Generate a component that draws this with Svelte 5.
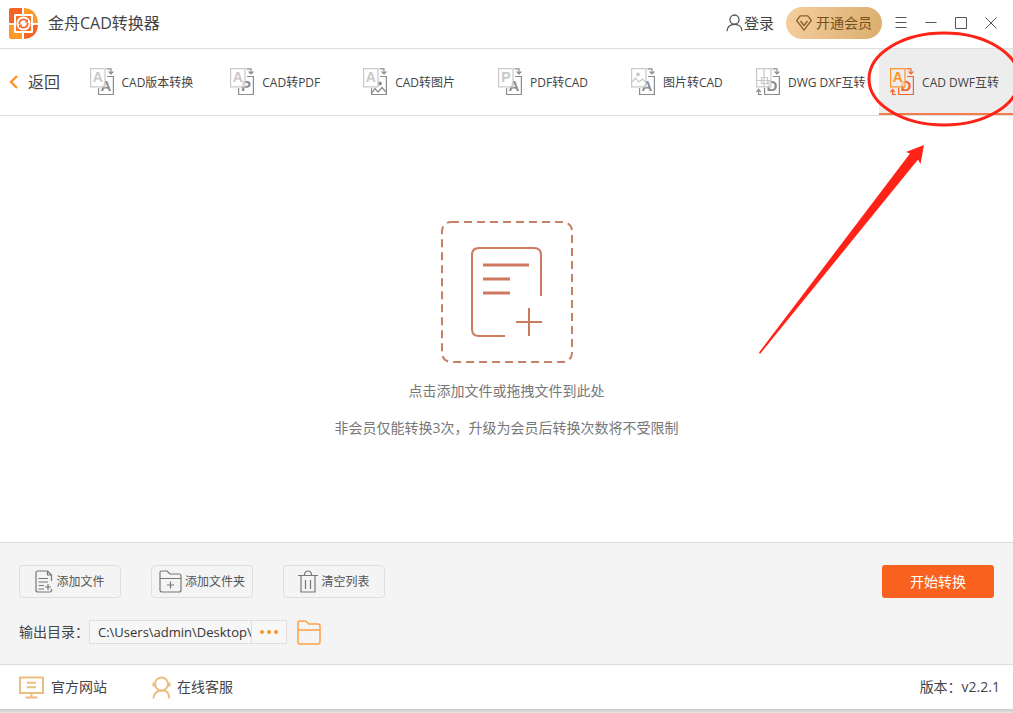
<script>
  const tabs = [
    { label: 'CAD版本转换', from: 'A', to: 'A' },
    { label: 'CAD转PDF', from: 'A', to: 'P' },
    { label: 'CAD转图片', from: 'A', to: 'image' },
    { label: 'PDF转CAD', from: 'P', to: 'A' },
    { label: '图片转CAD', from: 'image', to: 'A' },
    { label: 'DWG DXF互转', from: 'grid', to: 'D', both: true },
    { label: 'CAD DWF互转', from: 'A', to: 'D', both: true }
  ];
  let active = $state(6);
  let output = $state('C:\\Users\\admin\\Desktop\\');
</script>

{#snippet convertIcon(tab, on)}
  <svg class="tab-icon" class:on width="24" height="28" viewBox="0 0 24 28" fill="none" aria-hidden="true">
    <g class="front">
      <path d="M17 8.5H23.4V26.5H8.6V20" />
      {#if tab.to === 'image'}
        <path d="M9 25L12 20.5L15 24L19 19.5L23 24" /><circle class="dot" cx="17" cy="15.5" r="1.3" />
      {:else}
        <text x="16" y="23" text-anchor="middle">{tab.to}</text>
      {/if}
      <path d="M16.5 .8H21V5.5M18.6 3.5L21 6L23.4 3.5" />
      {#if tab.both}<path d="M6 26.5H2.6V21.5M.4 24L2.6 21.4L4.8 24" />{/if}
    </g>
    <g class="back">
      <path class="sheet" d="M.6 .6H15V18.8H.6Z" />
      {#if tab.from === 'image'}
        <path d="M1 14L4.500 10L8 14L11.500 11L15 14.500" /><circle class="dot" cx="7" cy="6.500" r="1.3" />
      {:else if tab.from === 'grid'}
        <path d="M8 .6V18.800M.6 12.500H15M5.500 9.500H11.500V15.500H5.500Z" />
      {:else}
        <text x="7.8" y="14" text-anchor="middle">{tab.from}</text>
      {/if}
    </g>
  </svg>
{/snippet}

<div class="window">
  <header>
    <svg width="30" height="31" viewBox="0 0 30 31" aria-hidden="true">
      <path fill="#f56426" d="M2 0H13V15H0V2Q0 0 2 0Z" />
      <path fill="#ff9828" d="M15 0Q28 1 29 15H15Z" />
      <path fill="#ff9828" d="M0 17H13V31H2Q0 31 0 29Z" />
      <path fill="#f56426" d="M15 17H29Q28 30 15 31Z" />
      <rect x="5" y="6" width="19" height="19" rx="1" fill="#fff" />
      <rect x="7" y="8" width="15" height="15" fill="#f5742c" />
      <path d="M0 16H7M22 16H29M14 0V8M14 23V31" stroke="#fff" stroke-width="2" />
      <circle cx="14.500" cy="15.500" r="7" fill="#fff" />
      <path d="M10.300 16A4.200 4.200 0 0 1 17.500 12.700M18.700 15A4.200 4.200 0 0 1 11.500 18.300" fill="none" stroke="#f5642c" stroke-width="1.7" />
      <path fill="#f5642c" d="M19 11V14.500H15.500ZM10 20V16.500H13.500Z" />
    </svg>
    <h1>金舟CAD转换器</h1>
    <button class="login">
      <svg width="17" height="18" viewBox="0 0 17 18" fill="none" stroke="#555" stroke-width="1.3" aria-hidden="true">
        <circle cx="8.5" cy="5.6" r="4.6" /><path d="M1 17.3C1 13 4 10.3 8.5 10.3S16 13 16 17.3" />
      </svg>登录
    </button>
    <button class="vip">
      <svg width="16" height="16" viewBox="0 0 16 16" fill="none" stroke="#8c6127" stroke-width="1.3" stroke-linejoin="round" aria-hidden="true">
        <path d="M4.2 .8H11.8L15.3 5.5L8 15.2L.7 5.5Z" /><path d="M4.5 6L8 10.5L11.5 6" />
      </svg>开通会员
    </button>
    <div class="controls">
      <button aria-label="菜单"><svg width="14" height="14" viewBox="0 0 14 14"><path d="M1.500 1.500H12.500M1.500 6.500H12.500M1.500 11.500H12.500" /></svg></button>
      <button aria-label="最小化"><svg width="14" height="14" viewBox="0 0 14 14"><path d="M1.500 6.500H12.500" /></svg></button>
      <button aria-label="最大化"><svg width="14" height="14" viewBox="0 0 14 14"><path d="M1.500 1.500H12.500V12.500H1.500Z" /></svg></button>
      <button aria-label="关闭"><svg width="14" height="14" viewBox="0 0 14 14"><path d="M1.500 1.500L12.500 12.500M12.500 1.500L1.500 12.500" /></svg></button>
    </div>
  </header>

  <nav>
    <button class="back-button">
      <svg width="9" height="14" viewBox="0 0 9 14" fill="none" stroke="#ff9328" stroke-width="2.4" aria-hidden="true"><path d="M8 1L2 7L8 13" /></svg>返回
    </button>
    {#each tabs as tab, i}
      <button class="tab" class:active={active === i} onclick={() => (active = i)}>
        {@render convertIcon(tab, active === i)}
        <span>{tab.label}</span>
      </button>
    {/each}
  </nav>

  <main>
    <button class="drop" aria-label="添加文件">
      <svg width="134" height="144" viewBox="0 0 134 144" fill="none" stroke="#cf7a60" aria-hidden="true">
        <rect x="2" y="2" width="130" height="140" rx="9" stroke="#c58068" stroke-width="2" stroke-dasharray="8 5" />
        <path d="M101 76V35Q101 28 94 28H39Q32 28 32 35V109Q32 116 39 116H65" stroke-width="2" />
        <path d="M43 45H89M43 59H70M43 73H70" stroke-width="3" />
        <path d="M76 102H102M89 88V116" stroke-width="2" />
      </svg>
    </button>
    <p>点击添加文件或拖拽文件到此处</p>
    <p>非会员仅能转换3次，升级为会员后转换次数将不受限制</p>
  </main>

  <section class="panel">
    <div class="actions">
      <button class="action">
        <svg width="18" height="23" viewBox="0 0 18 23" aria-hidden="true">
          <path d="M16.5 11V5L12.5 1H3Q1 1 1 3V20Q1 22 3 22H15Q16.5 22 16.5 20.5V19M12.5 1V5H16.5M3.5 8.5H13M3.5 12H13M3.5 15.5H9M3.5 19H9M13 14V20M10 17H16" />
        </svg>添加文件
      </button>
      <button class="action">
        <svg width="23" height="23" viewBox="0 0 23 23" aria-hidden="true">
          <path d="M1 19V2.5Q1 1 2.5 1H8L11 4H20Q22 4 22 6V20Q22 22 20 22H3Q1 22 1 20ZM1 8.5H22M11.5 11.5V18.5M8 15H15" />
        </svg>添加文件夹
      </button>
      <button class="action">
        <svg width="20" height="23" viewBox="0 0 20 23" aria-hidden="true">
          <path d="M0 5.5H20M3 5.5V22H17V5.5M6.5 5Q6.5 1 10 1T13.5 5M7.500 10V19M12.500 10V19" />
        </svg>清空列表
      </button>
      <button class="start">开始转换</button>
    </div>
    <div class="output">
      <label for="output">输出目录：</label>
      <input id="output" bind:value={output} />
      <button class="more" aria-label="选择目录"><i></i><i></i><i></i></button>
      <button class="open" aria-label="打开目录">
        <svg width="24" height="25" viewBox="0 0 24 25" fill="none" stroke="#ff9f45" stroke-width="1.5" aria-hidden="true">
          <path d="M1 22V2.5Q1 1 2.5 1H8.5L12 4H21Q23 4 23 6V22Q23 24 21 24H3Q1 24 1 22ZM1 10H23" />
        </svg>
      </button>
    </div>
  </section>

  <footer>
    <a class="site" href="#site">
      <svg width="25" height="23" viewBox="0 0 25 23" fill="none" stroke="#ebbd80" stroke-width="2" aria-hidden="true">
        <path d="M1 1.5H24V17H1ZM8 6.8H17M8 11.3H17M12.5 17V21M6.5 21.5H18.5" />
      </svg>官方网站
    </a>
    <a class="service" href="#service">
      <svg width="19" height="23" viewBox="0 0 19 23" fill="none" stroke="#ebbd80" stroke-width="2" aria-hidden="true">
        <circle cx="9.5" cy="8" r="6.5" /><path d="M1.5 22.5Q2 15 9.5 14.5T17.5 22.5" /><path d="M2 6.500V10.500M17 6.500V10.500" stroke-width="3" />
      </svg>在线客服
    </a>
    <span>版本：v2.2.1</span>
  </footer>
  <div class="shade"></div>

  <svg class="annotation" width="273" height="370" viewBox="0 0 273 370" aria-hidden="true">
    <ellipse cx="204" cy="79" rx="75" ry="46" fill="none" stroke="#ff2317" stroke-width="3" />
    <path fill="#ff2317" d="M184 145L166 152L170 153.500L19 352.500L20 354L178 159.500L180.500 164Z" />
  </svg>
</div>

<style>
  :global(body) { margin: 0; }
  .window {
    position: relative;
    display: flex;
    flex-direction: column;
    min-height: 100vh;
    overflow: hidden;
    background: #fff;
    color: #444;
    font-family: "Open Sans", "Noto Sans CJK SC", sans-serif;
    font-size: 14px;
    line-height: 20px;
  }
  button {
    display: flex;
    align-items: center;
    justify-content: center;
    padding: 0;
    border: 0;
    background: none;
    color: inherit;
    font: inherit;
    white-space: nowrap;
    cursor: pointer;
  }
  svg { flex: none; }
  header {
    display: flex;
    align-items: center;
    box-sizing: border-box;
    height: 49px;
    padding: 0 15px 2px 9px;
    border-bottom: 1px solid #dedede;
  }
  h1 {
    margin: 0 auto 0 9px;
    font-size: 16px;
    font-weight: 400;
    line-height: 24px;
  }
  .login { gap: 1px; font-size: 15px; }
  .vip {
    gap: 4px;
    height: 32px;
    margin-left: 12px;
    padding: 0 10px;
    border-radius: 16px;
    background: linear-gradient(105deg, #f5cf9f, #dbad6d);
    color: #76501c;
  }
  .controls { display: flex; gap: 16px; margin-left: 12px; }
  .controls svg { fill: none; stroke: #555; stroke-width: 1; }
  nav {
    display: flex;
    height: 66px;
    border-bottom: 1px solid #dedede;
  }
  .back-button {
    gap: 10px;
    width: 76px;
    padding-right: 7px;
    box-sizing: border-box;
    font-size: 16px;
  }
  .tab {
    flex: 1 1 0;
    gap: 8px;
    min-width: 0;
    padding: 2px 3px 0 0;
    border-bottom: 2px solid transparent;
    font-size: 12px;
  }
  .tab span { padding-top: 2px; }
  .tab.active { border-color: #f57c4a; background: #ededed; }
  .tab-icon { stroke-width: 1.2; }
  .tab-icon text { font: bold 14px "Liberation Sans", sans-serif; stroke: none; }
  .tab-icon .front text { font-size: 15px; }
  .front { stroke: #8c8c8c; }
  .front text, .front .dot { fill: #8c8c8c; }
  .back { stroke: #c9c9c9; }
  .back text, .back .dot { fill: #c9c9c9; }
  .back .sheet { fill: #fff; fill-opacity: 0.7; }
  .on .front { stroke: #f4662c; }
  .on .front text { fill: #f4662c; }
  .on .back { stroke: #ff9328; }
  .on .back text { fill: #ff9328; }
  .on .back .sheet { fill: #ededed; }
  main {
    display: flex;
    flex: 1;
    flex-direction: column;
    align-items: center;
    justify-content: center;
    gap: 17px;
    color: #777;
  }
  p { margin: 0; }
  .panel {
    display: flex;
    flex-direction: column;
    gap: 22px;
    padding: 22px 19px 20px;
    border-top: 1px solid #dcdcdc;
    border-bottom: 1px solid #dcdcdc;
    background: #f4f4f4;
  }
  .actions { display: flex; gap: 30px; }
  .action {
    gap: 3px;
    width: 102px;
    height: 33px;
    border: 1px solid #dedede;
    border-radius: 4px;
    color: #555;
    font-size: 12px;
  }
  .action svg { fill: none; stroke: #777; stroke-width: 1.2; }
  .start {
    width: 112px;
    height: 33px;
    margin-left: auto;
    border-radius: 3px;
    background: #f9621e;
    color: #fff;
  }
  .output { display: flex; align-items: center; height: 24px; }
  label { width: 70px; white-space: nowrap; }
  input {
    box-sizing: border-box;
    width: 163px;
    height: 24px;
    padding: 0 0 0 8px;
    border: 1px solid #dedede;
    background: #f7f7f7;
    color: #333;
    font: inherit;
    font-size: 13px;
  }
  .more {
    gap: 3px;
    box-sizing: border-box;
    width: 35px;
    height: 24px;
    border: 1px solid #dedede;
    border-left: 0;
    background: #f7f7f7;
  }
  .more i { width: 4px; height: 4px; border-radius: 2px; background: #ff9328; }
  .open { margin-left: 10px; }
  footer {
    display: flex;
    align-items: center;
    height: 44px;
    padding: 0 13px 0 19px;
  }
  footer a {
    display: flex;
    align-items: center;
    color: inherit;
    text-decoration: none;
  }
  .site { gap: 7px; }
  .service { gap: 6px; margin-left: 45px; }
  footer span { margin-left: auto; }
  .shade { height: 4px; background: linear-gradient(#c9c9c9, #e6e6e6); }
  .annotation { position: absolute; top: 0; right: 0; pointer-events: none; }
</style>
